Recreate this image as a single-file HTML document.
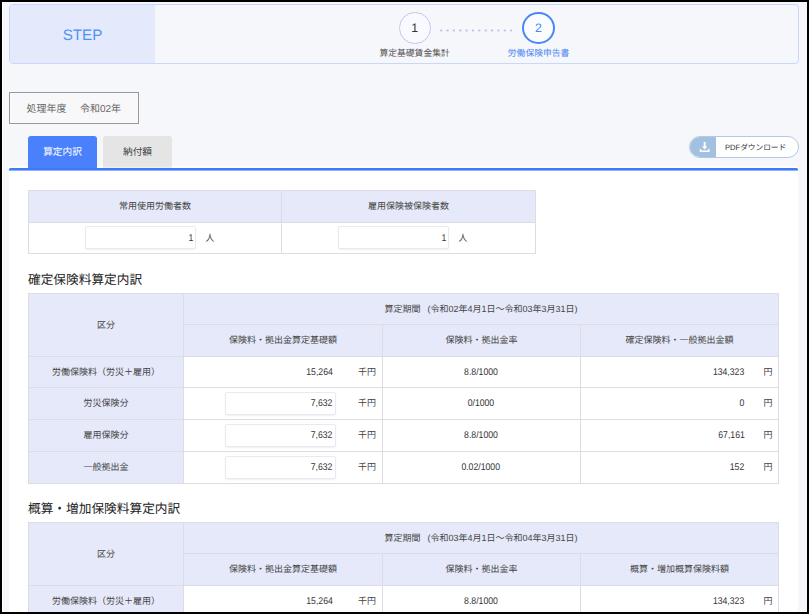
<!DOCTYPE html>
<html lang="ja">
<head>
<meta charset="utf-8">
<title>労働保険申告書</title>
<style>
*{box-sizing:border-box;margin:0;padding:0}
html,body{width:809px;height:614px;overflow:hidden;background:#000}
body{font-family:"Liberation Sans","Noto Sans CJK JP",sans-serif;color:#444;position:relative;text-rendering:geometricPrecision}
#frame{position:absolute;left:2px;top:2px;width:805px;height:610px;background:#f6f7fb;overflow:hidden;box-shadow:inset 1px 0 0 #fff}
.abs{position:absolute}
#step{left:7px;top:2px;width:789.5px;height:60px;border:1px solid #c9d7fa;border-radius:4px;background:#f6f7fb;overflow:hidden}
#step .left{position:absolute;left:0;top:0;width:145px;height:100%;background:#e4e9fb;color:#4b93f4;font-size:15.2px;text-align:center;line-height:61.5px}
.circle{position:absolute;width:31.5px;height:31.5px;border-radius:50%;border:1.3px solid #c3c8eb;background:#f9faff;text-align:center;line-height:30px;font-size:12.3px;color:#333}
.circle.on{width:32.6px;height:31.8px;border:2px solid #4b86f7;color:#4a8af4;background:#fbfcff;line-height:29px}
.slabel{position:absolute;font-size:8.8px;color:#555;white-space:nowrap;transform:translateX(-50%);line-height:12px}
.slabel.on{color:#4a86f5}
.dots{position:absolute;left:434px;top:25px;width:80px;height:6px}
#year{left:7px;top:90px;width:130px;height:32px;border:1px solid #999;background:#f8f8fb;font-size:10px;color:#666;line-height:33.6px;padding-left:16.5px;white-space:pre}
#year span{margin-left:3.5px}
.tab{top:134px;width:69px;height:32px;border-radius:3px 3px 0 0;font-size:9.7px;text-align:center;line-height:33.6px}
#tab1{left:26px;background:#4a80fb;color:#fff}
#tab2{left:101px;background:#e5e5e5;color:#444;height:32px;box-shadow:inset 0 -1.5px 0 #f1efec}
#wline{left:7px;top:164px;width:789px;height:2px;background:#fdfdfe}
#blueline{left:7px;top:166px;width:789px;height:3px;background:linear-gradient(#3f7af8 0,#3f7af8 2px,#8fb1fb 2px);border-radius:1.5px 1.5px 0 0}
#panel{left:7px;top:169px;width:789px;height:450px;background:#fff}
#pdf{left:687px;top:134px;width:110px;height:22px;border:1px solid #b3c9e6;border-radius:11px;background:#fff;overflow:hidden}
#pdf .ic{position:absolute;left:-1px;top:-1px;width:27px;height:23px;background:#a2c0e0}
#pdf svg{position:absolute;left:8.6px;top:4.4px;width:12px;height:12px}
#pdf .tx{position:absolute;left:35px;top:0;line-height:21px;font-size:7.7px;color:#333;white-space:nowrap;letter-spacing:-.05px}
table{border-collapse:collapse;position:absolute;table-layout:fixed}
td,th{border:1px solid #dcdde3;font-size:9px;font-weight:normal;color:#444;text-align:center;vertical-align:middle;padding:0 0 1px 0;white-space:nowrap;line-height:12px}
th,td.h{background:#e5e9f9}
td{background:#fff}
h3{position:absolute;left:26px;font-size:12.7px;font-weight:normal;color:#222;white-space:nowrap;line-height:16px}
td.c1,td.c2,td.c4{position:relative}
.num{font-size:9.75px;color:#333;display:inline-block;transform:scaleX(.89);transform-origin:100% 50%}
.num.mid{transform-origin:50% 50%;position:relative;top:.6px;left:-1px}
.per{margin-left:-2px}
.u{position:absolute;top:0;bottom:0;display:flex;align-items:center;padding-bottom:1px;font-size:9px;line-height:12px}
.inp{position:absolute;top:50%;margin-top:-12px;height:23px;border:1px solid #e9eaf0;border-radius:2px;background:#fff;box-shadow:0 1px 2px rgba(0,0,0,.06);display:flex;align-items:center;justify-content:flex-end;padding:2.4px 2.5px 0 0;line-height:12px}
.i1{left:56px;width:111px;padding-right:1.5px}
.i2{left:41px;width:111px}
.u0{left:176.5px}
.n1{right:49px;padding:1.6px 0 0 0}
.u1{left:174px}
.n2{right:33.5px;padding:1.6px 0 0 0}
.u2{right:5.5px}
</style>
</head>
<body>
<div id="frame">
  <div id="step" class="abs">
    <div class="left">STEP</div>
  </div>
  <div class="circle" style="left:397px;top:10px">1</div>
  <div class="circle on" style="left:520px;top:10px">2</div>
  <svg class="dots" viewBox="0 0 80 6"><g fill="#bcc4e6"><rect x="4.10" y="2.4" width="2.2" height="2" rx=".7"/><rect x="10.46" y="2.4" width="2.2" height="2" rx=".7"/><rect x="16.81" y="2.4" width="2.2" height="2" rx=".7"/><rect x="23.17" y="2.4" width="2.2" height="2" rx=".7"/><rect x="29.52" y="2.4" width="2.2" height="2" rx=".7"/><rect x="35.88" y="2.4" width="2.2" height="2" rx=".7"/><rect x="42.23" y="2.4" width="2.2" height="2" rx=".7"/><rect x="48.59" y="2.4" width="2.2" height="2" rx=".7"/><rect x="54.94" y="2.4" width="2.2" height="2" rx=".7"/><rect x="61.30" y="2.4" width="2.2" height="2" rx=".7"/><rect x="67.65" y="2.4" width="2.2" height="2" rx=".7"/><rect x="74.00" y="2.4" width="2.2" height="2" rx=".7"/></g></svg>
  <div class="slabel" style="left:412.6px;top:44.6px">算定基礎賃金集計</div>
  <div class="slabel on" style="left:536.6px;top:44.6px">労働保険申告書</div>

  <div id="year" class="abs">処理年度　<span>令和02年</span></div>
  <div id="wline" class="abs"></div>
  <div id="tab1" class="abs tab">算定内訳</div>
  <div id="tab2" class="abs tab">納付額</div>
  <div id="pdf" class="abs"><div class="ic"></div><svg viewBox="0 0 12 12"><rect x="4.7" y="1" width="1.9" height="5" fill="#fff"/><path d="M2.9 5.4h5.5L5.65 8.4z" fill="#fff"/><path d="M1.5 7.9v2.4h8.3V7.9" fill="none" stroke="#fff" stroke-width="1.5"/></svg><div class="tx">PDFダウンロード</div></div>
  <div id="blueline" class="abs"></div>
  <div id="panel" class="abs"></div>
<!--TABLES-->
<table style="left:26px;top:188px;width:507px">
<colgroup><col style="width:253px"><col style="width:254px"></colgroup>
<tr style="height:32px"><th>常用使用労働者数</th><th>雇用保険被保険者数</th></tr>
<tr style="height:31px"><td class="c1"><span class="inp i1"><span class="num">1</span></span><span class="u u0">人</span></td><td class="c1"><span class="inp i1"><span class="num">1</span></span><span class="u u0">人</span></td></tr>
</table>
<h3 style="top:270.4px">確定保険料算定内訳</h3>
<table style="left:26px;top:291px;width:750px">
<colgroup><col style="width:155px"><col style="width:199px"><col style="width:198px"><col style="width:198px"></colgroup>
<tr style="height:31px"><th rowspan="2">区分</th><th colspan="3">算定期間　<span class="per">(令和02年4月1日～令和03年3月31日)</span></th></tr>
<tr style="height:32px"><th>保険料・拠出金算定基礎額</th><th>保険料・拠出金率</th><th>確定保険料・一般拠出金額</th></tr>
<tr style="height:31px"><td class="h">労働保険料（労災＋雇用）</td><td class="c2"><span class="u n1"><span class="num">15,264</span></span><span class="u u1">千円</span></td><td class="c3"><span class="num mid">8.8/1000</span></td><td class="c4"><span class="u n2"><span class="num">134,323</span></span><span class="u u2">円</span></td></tr>
<tr style="height:32px"><td class="h">労災保険分</td><td class="c2"><span class="inp i2"><span class="num">7,632</span></span><span class="u u1">千円</span></td><td class="c3"><span class="num mid">0/1000</span></td><td class="c4"><span class="u n2"><span class="num">0</span></span><span class="u u2">円</span></td></tr>
<tr style="height:32px"><td class="h">雇用保険分</td><td class="c2"><span class="inp i2"><span class="num">7,632</span></span><span class="u u1">千円</span></td><td class="c3"><span class="num mid">8.8/1000</span></td><td class="c4"><span class="u n2"><span class="num">67,161</span></span><span class="u u2">円</span></td></tr>
<tr style="height:32px"><td class="h">一般拠出金</td><td class="c2"><span class="inp i2"><span class="num">7,632</span></span><span class="u u1">千円</span></td><td class="c3"><span class="num mid">0.02/1000</span></td><td class="c4"><span class="u n2"><span class="num">152</span></span><span class="u u2">円</span></td></tr>
</table>
<h3 style="top:499px">概算・増加保険料算定内訳</h3>
<table style="left:26px;top:520px;width:750px">
<colgroup><col style="width:155px"><col style="width:199px"><col style="width:198px"><col style="width:198px"></colgroup>
<tr style="height:31px"><th rowspan="2">区分</th><th colspan="3">算定期間　<span class="per">(令和03年4月1日～令和04年3月31日)</span></th></tr>
<tr style="height:32px"><th>保険料・拠出金算定基礎額</th><th>保険料・拠出金率</th><th>概算・増加概算保険料額</th></tr>
<tr style="height:32px"><td class="h">労働保険料（労災＋雇用）</td><td class="c2"><span class="u n1"><span class="num">15,264</span></span><span class="u u1">千円</span></td><td class="c3"><span class="num mid">8.8/1000</span></td><td class="c4"><span class="u n2"><span class="num">134,323</span></span><span class="u u2">円</span></td></tr>
<tr style="height:32px"><td class="h">労災保険分</td><td class="c2"><span class="inp i2"><span class="num">7,632</span></span><span class="u u1">千円</span></td><td class="c3"><span class="num mid">0/1000</span></td><td class="c4"><span class="u n2"><span class="num">0</span></span><span class="u u2">円</span></td></tr>
</table>
<!--/TABLES-->
</div>
</body>
</html>
